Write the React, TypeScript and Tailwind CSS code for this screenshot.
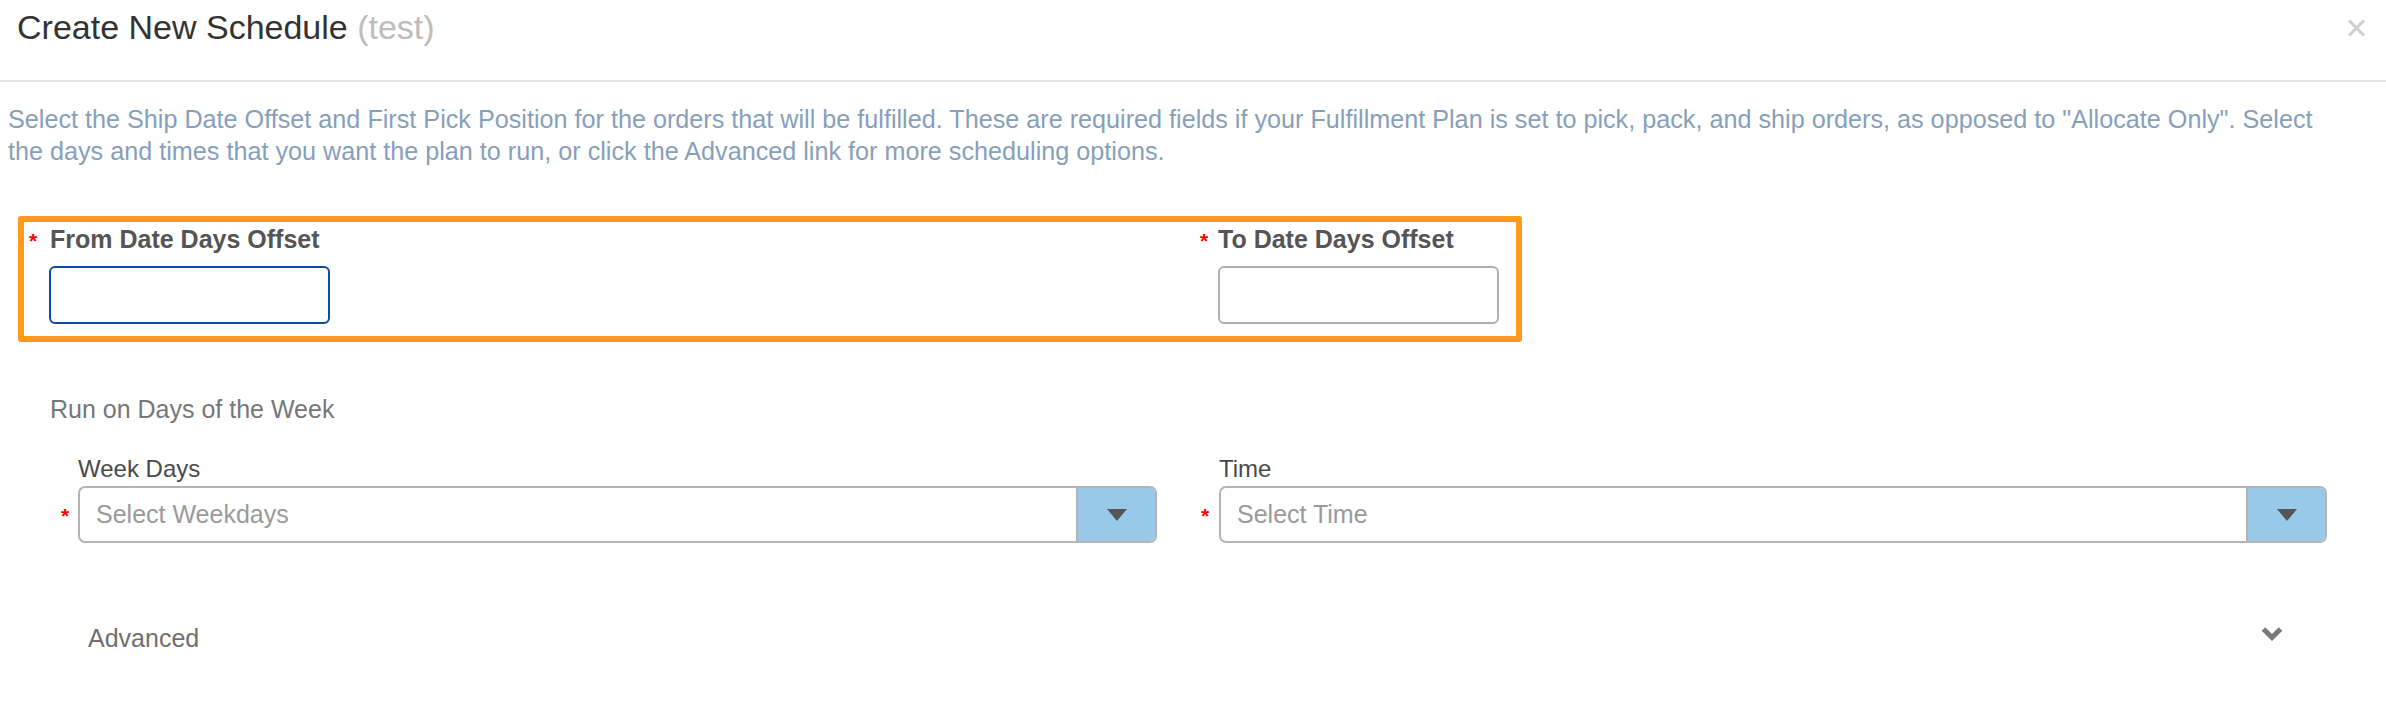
import { useState } from 'react';

const font = "font-['Liberation_Sans','Helvetica',Arial,sans-serif]";

function Req() {
  return <span className="text-[21px] font-bold leading-none text-[#ff0000]">*</span>;
}

function Caret() {
  return (
    <svg width="22" height="14" viewBox="0 0 22 14" className="blur-[0.4px]">
      <polygon points="1,1 21,1 11,13" fill="#555555" />
    </svg>
  );
}

function SelectBox({ placeholder, width }: { placeholder: string; width: string }) {
  return (
    <div
      className={`flex h-[57px] ${width} overflow-hidden rounded-[7px] border-2 border-[#b4b4b4] bg-white`}
    >
      <div className="flex flex-1 items-center pl-[16px] text-[25px] text-[#9a9a9a]">
        {placeholder}
      </div>
      <div className="flex w-[79px] items-center justify-center border-l-2 border-[#b4b4b4] bg-[#99c9e9]">
        <Caret />
      </div>
    </div>
  );
}

export default function App() {
  const [from, setFrom] = useState('');
  const [to, setTo] = useState('');

  return (
    <div className={`min-h-[710px] w-[2386px] bg-white ${font}`}>
      {/* header */}
      <div className="flex h-[82px] items-start justify-between border-b-2 border-[#e4e4e4] pl-[17px] pr-[20px] pt-[7px]">
        <h1 className="text-[34px] leading-[40px] text-[#333333]">
          Create New Schedule <span className="text-[#bdbdbd]">(test)</span>
        </h1>
        <button className="mt-[12px] text-[#d0d0d0]" aria-label="Close">
          <svg width="19" height="18" viewBox="0 0 19 18">
            <path d="M2 1.5 L17 16.5 M17 1.5 L2 16.5" stroke="currentColor" strokeWidth="3" />
          </svg>
        </button>
      </div>

      <p className="pl-[8px] pt-[21px] text-[25.2px] leading-[32px] text-[#87a0ba]">
        Select the Ship Date Offset and First Pick Position for the orders that will be fulfilled.
        These are required fields if your Fulfillment Plan is set to pick, pack, and ship orders, as
        opposed to "Allocate Only". Select
        <br />
        the days and times that you want the plan to run, or click the Advanced link for more
        scheduling options.
      </p>

      {/* highlighted offsets */}
      <div className="ml-[18px] mt-[49px] grid h-[126px] w-[1504px] grid-cols-[1163px_1fr] rounded-[3px] border-[6px] border-[#ff9a1f] pt-[2px]">
        <div className="grid grid-cols-[21px_auto] items-start pl-[5px]">
          <span className="pt-[6px]">
            <Req />
          </span>
          <div>
            <div className="text-[25px] font-bold leading-[30px] text-[#555555]">
              From Date Days Offset
            </div>
            <input
              value={from}
              onChange={(e) => setFrom(e.target.value)}
              className="-ml-px mt-[12px] h-[58px] w-[281px] rounded-[6px] border-2 border-[#0d4d9b] bg-white px-3 text-[22px] outline-none"
            />
          </div>
        </div>
        <div className="grid grid-cols-[18px_auto] items-start pl-[13px]">
          <span className="pt-[6px]">
            <Req />
          </span>
          <div>
            <div className="text-[25px] font-bold leading-[30px] text-[#555555]">
              To Date Days Offset
            </div>
            <input
              value={to}
              onChange={(e) => setTo(e.target.value)}
              className="mt-[12px] h-[58px] w-[281px] rounded-[6px] border-2 border-[#b0b0b0] bg-white px-3 text-[22px] outline-none"
            />
          </div>
        </div>
      </div>

      <div className="pl-[50px] pt-[52px] text-[25px] leading-[30px] text-[#777777]">
        Run on Days of the Week
      </div>

      <div className="mt-[31px] grid grid-cols-[1140px_1fr] pl-[50px]">
        <div className="grid grid-cols-[28px_auto]">
          <span />
          <div className="text-[24px] leading-[28px] text-[#4a4a4a]">Week Days</div>
          <span className="flex items-center pl-[11px] pt-[5px]">
            <Req />
          </span>
          <div className="mt-[3px]">
            <SelectBox placeholder="Select Weekdays" width="w-[1079px]" />
          </div>
        </div>
        <div className="grid grid-cols-[29px_auto]">
          <span />
          <div className="text-[24px] leading-[28px] text-[#4a4a4a]">Time</div>
          <span className="flex items-center pl-[11px] pt-[5px]">
            <Req />
          </span>
          <div className="mt-[3px]">
            <SelectBox placeholder="Select Time" width="w-[1108px]" />
          </div>
        </div>
      </div>

      <div className="mt-[81px] flex items-center justify-between pl-[88px] pr-[103px]">
        <span className="text-[25px] leading-[28px] text-[#6f6f6f]">Advanced</span>
        <svg width="22" height="15" viewBox="0 0 22 15" className="-mt-[10px]">
          <path d="M2.5 3 L11 11.5 L19.5 3" fill="none" stroke="#7a7a7a" strokeWidth="5" />
        </svg>
      </div>
    </div>
  );
}
